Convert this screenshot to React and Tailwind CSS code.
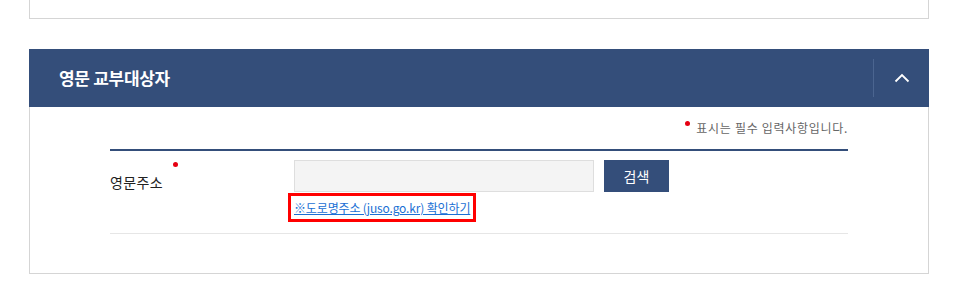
import React from 'react';

const RequiredDot = ({ className = '' }) => (
  <span className={`inline-block w-[5px] h-[5px] rounded-full bg-[#e60012] ${className}`}></span>
);

const App = () => {
  return (
    <div
      className="w-[958px] h-[299px] bg-white px-[29px] overflow-hidden"
      style={{ fontFamily: '"Noto Sans CJK KR", "Noto Sans", sans-serif' }}
    >
      {/* 윗 박스 끝부분 */}
      <div className="h-[19px] border-x border-b border-[#d5d5d5]"></div>

      {/* 영문 교부대상자 */}
      <div className="mt-[30px] h-[58px] bg-[#344e7a] flex items-stretch">
        <h2 className="flex-1 flex items-center pl-[30px] text-[17px] font-bold text-white tracking-[-0.3px]">
          영문 교부대상자
        </h2>
        <button className="w-[56px] my-[10px] border-l border-[#4b6590] flex items-center justify-center">
          <svg width="16" height="10" viewBox="0 0 16 10" fill="none" stroke="white" strokeWidth="1.8">
            <path d="M1.5 8.5 L8 2 L14.5 8.5" />
          </svg>
        </button>
      </div>

      <div className="h-[167px] border-x border-b border-[#d5d5d5] pl-[80px] pr-[80px]">
        <p className="pt-[12px] flex justify-end items-start text-[12px] leading-[17px] text-[#666] tracking-[0.7px]">
          <RequiredDot className="mt-[2px] mr-[6px]" />
          표시는 필수 입력사항입니다.
        </p>
        <div className="mt-[13px] h-[2px] bg-[#344e7a]"></div>

        <div className="flex border-b border-[#e6e6e6] pt-[9px] pb-[11px]">
          <div className="w-[184px] pt-[12px] text-[14px] leading-[20px] text-[#222] flex items-start tracking-[0.4px]">
            영문주소
            <RequiredDot className="-mt-[10px] ml-[10px]" />
          </div>
          <div>
            <div className="flex gap-[10px]">
              <input
                type="text"
                className="w-[300px] h-[32px] bg-[#f4f4f4] border border-[#dedede] outline-none"
              />
              <button className="w-[65px] h-[32px] bg-[#344e7a] text-white text-[14px]">검색</button>
            </div>
            <div className="mt-[1px] -ml-[6px] inline-block border-[3px] border-[#f00] px-[3px] py-[3px] text-[12px] leading-[17px]">
              <a href="#" className="text-[12px] leading-[17px] text-[#1a6fd4] underline tracking-[-0.15px]">
                ※도로명주소 (juso.go.kr) 확인하기
              </a>
            </div>
          </div>
        </div>
      </div>
    </div>
  );
};

export default App;
